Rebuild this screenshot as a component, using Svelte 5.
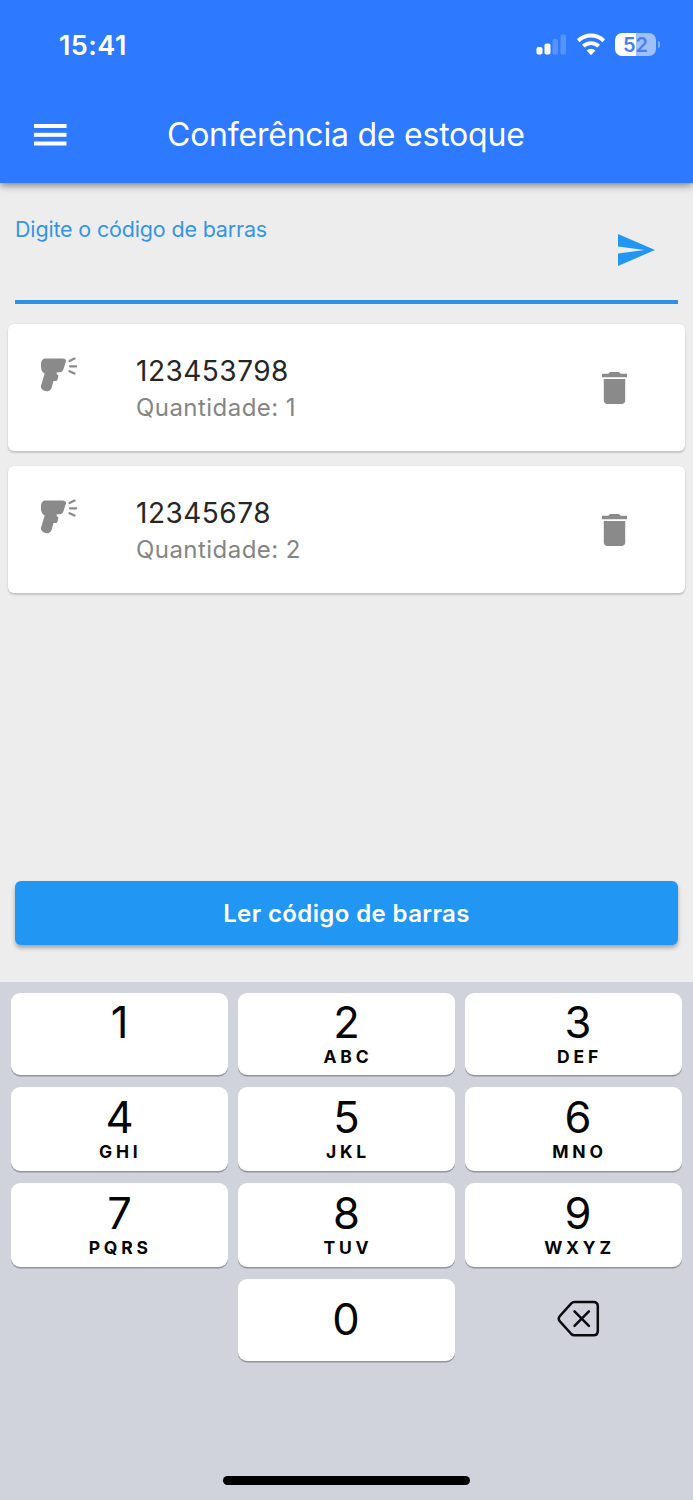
<script>
  const items = [
    { code: '123453798', quantity: 1 },
    { code: '12345678', quantity: 2 }
  ];
  const keys = [
    ['1', ''], ['2', 'ABC'], ['3', 'DEF'],
    ['4', 'GHI'], ['5', 'JKL'], ['6', 'MNO'],
    ['7', 'PQRS'], ['8', 'TUV'], ['9', 'WXYZ']
  ];
</script>

<div class="screen">
  <header>
    <div class="status">
      <span class="time">15:41</span>
      <div class="indicators">
        <svg width="32" height="22" viewBox="0 0 32 22" fill="#fff">
          <rect x="1.500" y="14" width="6" height="7.500" rx="1.800" />
          <rect x="9.500" y="10.500" width="6" height="11" rx="1.800" />
          <rect x="17.500" y="6" width="5.500" height="15.500" rx="1.600" opacity=".2" />
          <rect x="25.500" y="1.500" width="5.500" height="20" rx="1.600" opacity=".2" />
        </svg>
        <svg class="wifi" width="30" height="22" viewBox="0 0 30 22">
          <path d="M2.200 7.800a18.400 18.400 0 0 1 25.600 0" fill="none" stroke="#fff" stroke-width="4" />
          <path d="M7.300 13.200a11.200 11.200 0 0 1 15.400 0" fill="none" stroke="#fff" stroke-width="3.800" />
          <path d="M10.600 17.600a6.300 6.300 0 0 1 8.800 0L15.800 21.500Q15 22 14.200 21.500z" fill="#fff" />
        </svg>
        <div class="battery"><span>52</span></div>
        <i class="nub"></i>
      </div>
    </div>
    <div class="appbar">
      <svg class="menu" width="33" height="24" viewBox="0 0 33 24" fill="#fff">
        <rect y="1" width="32.500" height="4" /><rect y="9.800" width="32.500" height="4" /><rect y="18.500" width="32.500" height="4" />
      </svg>
      <h1>Conferência de estoque</h1>
    </div>
  </header>

  <main>
    <div class="field">
      <span class="label">Digite o código de barras</span>
      <svg class="send" width="37" height="32" viewBox="2 3 21 18" preserveAspectRatio="none" fill="#2196f3">
        <path d="M2.010 21L23 12 2.010 3 2 10l15 2-15 2z" />
      </svg>
    </div>

    {#each items as item}
      <div class="card">
        <svg class="scanner" width="38" height="36" viewBox="0 0 38 36" fill="#8a8a8a">
          <path d="M6 1.500H22.500C25.500 1.500 26.500 3.100 25.700 5.200L23.500 12C22.800 14.200 21.500 15.300 19.500 15.300H16.700V17.500H16.800C18.100 17.500 18.600 18.200 18.300 19.300L17.700 22C17.400 23.400 16.600 24 15.500 24H13.500L11.700 30.500C10.700 33.700 8.500 34.600 5.500 34C2 33.200.300 31 1.200 28L4.700 16.500C2.400 15.400 1 13.200 1 10V7C1 3.500 3 1.500 6 1.500z" />
          <path d="M29.500 4l5-2.400M30 9.300h6.200M29.500 14.200l5 2.400" fill="none" stroke="#8a8a8a" stroke-width="2.200" stroke-linecap="round" />
        </svg>
        <div class="info">
          <span class="code">{item.code}</span>
          <span class="qty">Quantidade: {item.quantity}</span>
        </div>
        <svg class="trash" width="25" height="32" viewBox="5 3 14 18" preserveAspectRatio="none" fill="#8a8a8a">
          <path d="M6 19c0 1.100.9 2 2 2h8c1.100 0 2-.9 2-2V7H6v12zM19 4h-3.500l-1-1h-5l-1 1H5v2h14V4z" />
        </svg>
      </div>
    {/each}

    <button class="read"><span>Ler código de barras</span></button>
  </main>

  <section class="keyboard">
    <div class="grid">
      {#each keys as [digit, letters]}
        <div class="key">
          <span class="digit">{digit}</span>
          <span class="letters">{letters}</span>
        </div>
      {/each}
      <div></div>
      <div class="key zero"><span class="digit">0</span></div>
      <div class="erase">
        <svg width="44" height="38" viewBox="0 0 44 38" fill="none" stroke="#0b0b0d" stroke-width="2.500" stroke-linecap="round" stroke-linejoin="round">
          <path d="M17.500 2H36.500C39.300 2 40.800 3.500 40.800 6.300V31C40.800 33.800 39.300 35.300 36.500 35.300H17.500C16.200 35.300 15.200 34.900 14.300 34L2.900 21.300C1.500 19.700 1.500 17.600 2.900 16L14.300 3.300C15.200 2.400 16.200 2 17.500 2z" />
          <path d="M17.500 11.400l14.400 14.400M31.900 11.400L17.500 25.800" />
        </svg>
      </div>
    </div>
    <div class="home"></div>
  </section>
</div>

<style>
  :global(body) { margin: 0; }
  .screen {
    width: 693px; height: 1500px; overflow: hidden;
    display: flex; flex-direction: column;
    background: #ededed;
    font-family: Inter, "Liberation Sans", sans-serif;
  }
  svg { display: block; flex: none; }
  header {
    height: 183px; box-sizing: border-box; flex: none;
    background: #2d79ff; color: #fff;
    box-shadow: 0 2px 8px rgba(0, 0, 0, .5);
  }
  .status { height: 90px; display: flex; justify-content: space-between; padding: 0 33px 0 59px; }
  .time { line-height: 91px; font-size: 27px; font-weight: 600; letter-spacing: .45px; }
  .indicators { height: 88px; display: flex; align-items: center; }
  .wifi { margin-left: 9px; }
  .battery {
    margin-left: 9px; width: 41px; height: 23px; border-radius: 7px;
    background: linear-gradient(90deg, #fff 52%, #9fc0ff 52%);
    color: #4a80ee; font-size: 20px; font-weight: 600; line-height: 24px; text-align: center;
  }
  .nub { width: 2.500px; height: 7px; margin-left: 1.500px; border-radius: 0 3px 3px 0; background: #83adff; }
  .appbar { height: 90px; display: flex; align-items: center; padding-left: 34px; }
  .menu { margin-right: 100px; }
  h1 { margin: 0; font-size: 32px; font-weight: 400; line-height: 88px; letter-spacing: -.22px; white-space: nowrap; }
  main { height: 799px; flex: none; display: flex; flex-direction: column; }
  .field {
    height: 117px; margin: 0 15px 20px; border-bottom: 4px solid #2e90e6;
    display: flex; justify-content: space-between;
  }
  .label { margin-top: 32px; line-height: 28px; font-size: 21.500px; letter-spacing: -.17px; color: #3495e4; white-space: nowrap; }
  .send { margin: 51px 23px 0 0; }
  .card {
    height: 127px; margin: 0 8px 15px; border-radius: 6px; background: #fff; flex: none;
    box-shadow: 0 2px 2px rgba(0, 0, 0, .16), 0 0 2px rgba(0, 0, 0, .08);
    display: flex;
  }
  .scanner { margin: 33px 0 0 32px; }
  .info { margin: 28px 0 0 58px; display: flex; flex-direction: column; flex: 1; }
  .code { line-height: 38px; font-size: 28px; letter-spacing: .5px; color: #262626; }
  .qty { line-height: 36px; font-size: 24px; letter-spacing: .45px; color: #858585; }
  .trash { margin: 48px 58px 0 0; }
  .read {
    margin: auto 15px 37px; height: 64px; padding: 0; border: 0; border-radius: 6px;
    background: #2196f3; color: #fff; font: 600 24px/65px Inter, "Liberation Sans", sans-serif; letter-spacing: .38px;
    box-shadow: 0 3px 4px rgba(0, 0, 0, .3);
  }
  .keyboard {
    flex: 1; background: #d0d3dc; display: flex; flex-direction: column; align-items: center;
    justify-content: space-between; padding: 11px 11px 15px;
  }
  .grid { width: 100%; display: grid; grid-template-columns: repeat(3, 217px); grid-template-rows: 82px 84px 84px 82px; gap: 12px 10px; }
  .key {
    background: #fff; border-radius: 9px; box-shadow: 0 1.500px 0 #939599; color: #050505;
    display: flex; flex-direction: column; align-items: center; justify-content: center;
  }
  .key:nth-child(3n) { padding-left: 9px; }
  .digit { height: 52px; line-height: 58px; font-size: 43.500px; }
  .letters { height: 24px; margin-bottom: 6px; line-height: 24px; font-size: 17.500px; font-weight: 700; letter-spacing: 3.800px; margin-right: -3px; }
  .key:nth-child(3n + 1) .letters { margin-right: -1.500px; }
  .zero .digit { height: 82px; line-height: 80px; }
  .key.zero .digit { margin-right: 1px; }
  .erase { display: flex; justify-content: center; padding: 20.500px 0 0 10px; }
  .home { width: 247px; height: 9px; border-radius: 5px; background: #000; }
</style>
